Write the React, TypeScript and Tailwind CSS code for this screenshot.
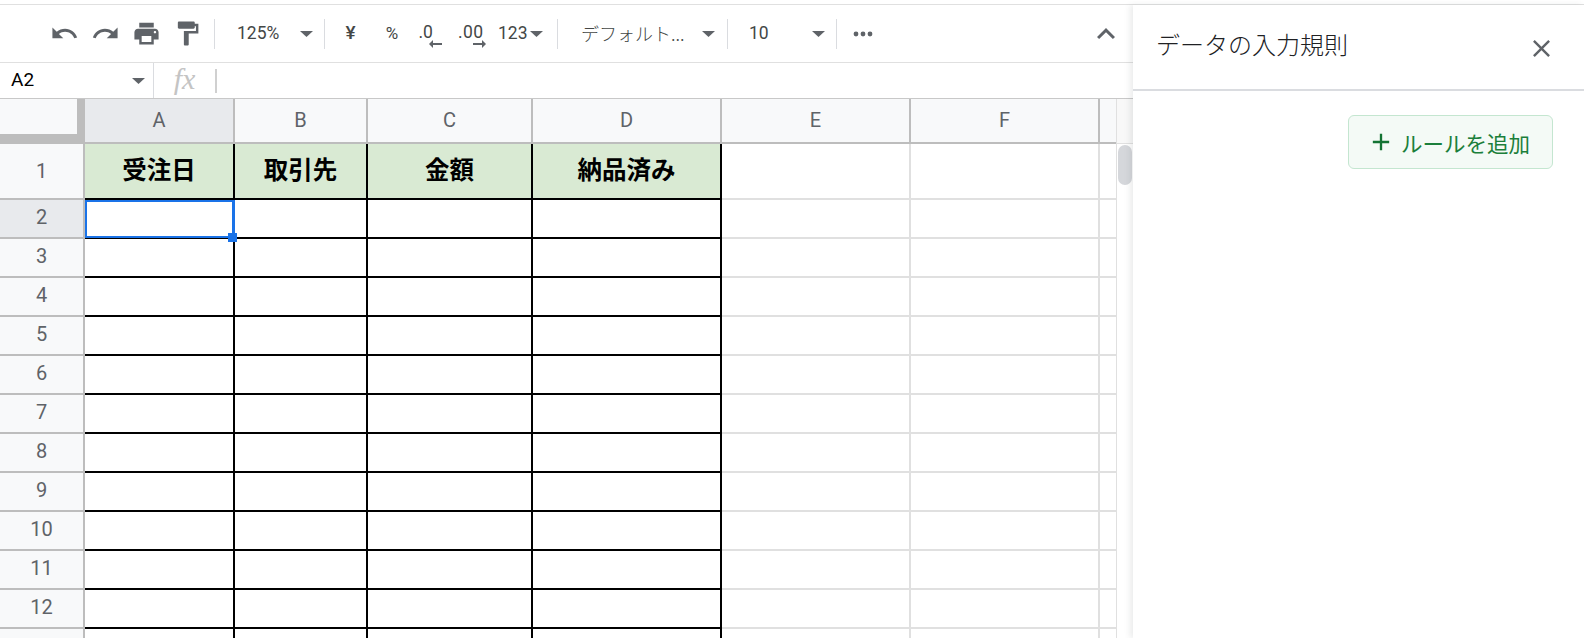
import React from "react";

const UI = "font-['Roboto','Noto_Sans_CJK_JP',sans-serif]";
const JP = "font-['Noto_Sans_CJK_JP','Noto_Sans',sans-serif]";

function Caret({ className = "" }: { className?: string }) {
  return (
    <svg width="13" height="6" viewBox="0 0 13 6" className={className}>
      <path d="M0 0h13L6.5 6z" fill="#5f6368" />
    </svg>
  );
}

function Mat({ d, size = 28, color = "#5f6368", vb = 24 }: { d: string; size?: number; color?: string; vb?: number }) {
  return (
    <svg width={size} height={size} viewBox={`0 0 ${vb} ${vb}`} className="shrink-0">
      <path d={d} fill={color} />
    </svg>
  );
}

const Sep = () => <div className="w-px h-[30px] bg-[#dadce0] shrink-0" />;

function Toolbar() {
  const icons = [
    "M12.5 8c-2.65 0-5.05.99-6.9 2.6L2 7v9h9l-3.62-3.62c1.39-1.16 3.16-1.88 5.12-1.88 3.54 0 6.55 2.31 7.6 5.5l2.37-.78C21.08 11.03 17.15 8 12.5 8z",
    "M18.4 10.6C16.55 8.99 14.15 8 11.5 8c-4.65 0-8.58 3.03-9.96 7.22L3.9 16c1.05-3.19 4.05-5.5 7.6-5.5 1.95 0 3.73.72 5.12 1.88L13 16h9V7l-3.6 3.6z",
    "M19 8H5c-1.66 0-3 1.34-3 3v6h4v4h12v-4h4v-6c0-1.66-1.34-3-3-3zm-3 11H8v-5h8v5zm3-7c-.55 0-1-.45-1-1s.45-1 1-1 1 .45 1 1-.45 1-1 1zm-1-9H6v4h12V3z",
    "M18 4V3c0-.55-.45-1-1-1H5c-.55 0-1 .45-1 1v4c0 .55.45 1 1 1h12c.55 0 1-.45 1-1V6h1v4H9v11c0 .55.45 1 1 1h2c.55 0 1-.45 1-1v-9h8V4h-3z",
  ];
  return (
    <div className={`h-[57px] flex items-center pl-[44px] text-[#444746] text-[17.5px] ${UI}`}>
      {icons.map((d, i) => (
        <div key={i} className="w-[41px] flex justify-center shrink-0">
          <Mat d={d} size={29} />
        </div>
      ))}
      <div className="w-[6px] shrink-0" />
      <Sep />
      <div className="w-[109px] shrink-0 flex items-center pl-[22px]">
        <span className="w-[63px] whitespace-nowrap">125%</span>
        <Caret />
      </div>
      <Sep />
      <div className="w-[50px] shrink-0 text-center font-medium text-[19px] pl-[1px]">¥</div>
      <div className="w-[31px] shrink-0 text-center text-[17px] pl-[3px]">%</div>
      <div className="w-[42px] shrink-0 flex justify-center pl-[6px]">
        <div className="flex flex-col items-start leading-[18px] mt-[3px]">
          <span>.0</span>
          <svg width="13" height="8" viewBox="0 0 13 8" className="ml-[10px] -mt-[1px]">
            <path d="M13 3H4V0L0 4l4 4V5h9z" fill="#5f6368" />
          </svg>
        </div>
      </div>
      <div className="w-[43px] shrink-0 flex justify-center pl-[5px]">
        <div className="flex flex-col items-start leading-[18px] mt-[3px]">
          <span className="tracking-[0.4px] whitespace-nowrap">.00</span>
          <svg width="13" height="8" viewBox="0 0 13 8" className="ml-[15px] -mt-[1px]">
            <path d="M0 3h9V0l4 4-4 4V5H0z" fill="#5f6368" />
          </svg>
        </div>
      </div>
      <div className="shrink-0 flex items-center w-[66px] pl-[7px]">
        <span>123</span>
        <Caret className="ml-[2px]" />
      </div>
      <Sep />
      <div className={`w-[169px] shrink-0 flex items-center pl-[23px] ${JP}`}>
        <span className="w-[121px] whitespace-nowrap text-[18px] font-light">デフォルト...</span>
        <Caret />
      </div>
      <Sep />
      <div className="w-[108px] shrink-0 flex items-center pl-[21px]">
        <span className="w-[63px]">10</span>
        <Caret />
      </div>
      <Sep />
      <div className="w-[53px] shrink-0 flex justify-center -ml-[1px]">
        <svg width="20" height="6" viewBox="0 0 20 6">
          <circle cx="3" cy="3" r="2.4" fill="#5f6368" />
          <circle cx="10" cy="3" r="2.4" fill="#5f6368" />
          <circle cx="17" cy="3" r="2.4" fill="#5f6368" />
        </svg>
      </div>
      <div className="flex-1 flex justify-end pr-[9px]">
        <Mat d="M12 8l-6 6 1.41 1.41L12 10.83l4.59 4.58L18 14z" size={36} />
      </div>
    </div>
  );
}

function FormulaBar() {
  return (
    <div className={`h-[35px] flex items-center ${UI}`}>
      <div className="w-[154px] h-full flex items-center pl-[11px] border-r border-[#dadce0] shrink-0">
        <span className="text-[19px] text-black w-[121px]">A2</span>
        <Caret />
      </div>
      <div className="w-[61px] text-center font-['Liberation_Serif',serif] italic text-[30px] text-[#c4c4c4] leading-none shrink-0 -mt-[4px]">
        fx
      </div>
      <div className="w-[2px] h-[24px] bg-[#d0d0d0]" />
    </div>
  );
}

const COLS = [
  { l: "A", w: "w-[150px]", h: "受注日" },
  { l: "B", w: "w-[133px]", h: "取引先" },
  { l: "C", w: "w-[165px]", h: "金額" },
  { l: "D", w: "w-[189px]", h: "納品済み" },
  { l: "E", w: "w-[189px]", h: "" },
  { l: "F", w: "w-[189px]", h: "" },
];

function HeaderRow() {
  return (
    <div className={`flex h-[45px] shrink-0 ${UI} text-[#5f6368] text-[20px]`}>
      <div className="w-[85px] shrink-0 bg-[#f8f9fa] border-r-[8px] border-b-[10px] border-[#bdbdbd]" />
      {COLS.map((c, i) => (
        <div
          key={c.l}
          className={`${c.w} shrink-0 flex items-center justify-center pb-[2px] border-r-2 border-b-[2px] border-[#bdbdbd] ${
            i === 0 ? "bg-[#e8eaed]" : "bg-[#f8f9fa]"
          }`}
        >
          {c.l}
        </div>
      ))}
      <div className="flex-1 bg-[#f8f9fa] border-b-2 border-[#bdbdbd]" />
    </div>
  );
}

function Row({ n }: { n: number }) {
  const first = n === 1;
  const selected = n === 2;
  return (
    <div className={`flex shrink-0 ${first ? "h-[56px]" : "h-[39px]"}`}>
      <div
        className={`w-[85px] shrink-0 flex items-center justify-center ${first ? "pb-[1px]" : "pb-[4px]"} border-r-2 border-b-2 border-[#bdbdbd] text-[#5f6368] text-[20px] ${UI} ${
          selected ? "bg-[#e8eaed]" : "bg-[#f8f9fa]"
        }`}
      >
        {n < 13 ? n : null}
      </div>
      {COLS.map((c, i) => {
        const dark = i < 4;
        return (
          <div
            key={c.l}
            className={`${c.w} shrink-0 relative flex items-center justify-center border-r-2 border-b-2 ${
              dark ? "border-black" : "border-[#e0e0e0]"
            } ${first && dark ? "bg-[#d9ead3]" : "bg-white"} ${selected && i === 0 ? "z-10" : ""}`}
          >
            {first && c.h ? (
              <span className={`${JP} font-bold text-[24.5px] text-black pb-[4px]`}>{c.h}</span>
            ) : null}
            {selected && i === 0 ? (
              <>
                <div className="absolute left-0 top-0 -right-[2px] -bottom-[1px] border-2 border-[#1a73e8] border-r-[3px]" />
                <div className="absolute -right-[4px] -bottom-[5px] w-[9px] h-[9px] bg-[#1a73e8]" />
              </>
            ) : null}
          </div>
        );
      })}
      <div className="flex-1 border-b-2 border-[#e0e0e0]" />
    </div>
  );
}

function Sheet() {
  return (
    <div className="flex flex-1 min-h-0 overflow-hidden">
      <div className="w-[1116px] shrink-0 flex flex-col">
        <HeaderRow />
        {[1, 2, 3, 4, 5, 6, 7, 8, 9, 10, 11, 12, 13].map((n) => (
          <Row key={n} n={n} />
        ))}
      </div>
      <div className="flex-1 border-l border-[#e0e0e0] flex flex-col">
        <div className="h-[45px] bg-[#f8f8f8] border-b border-[#e0e0e0] shrink-0" />
        <div className="w-[14px] h-[40px] ml-[1px] mt-[1px] rounded-[7px] bg-[#d5d7db]" />
      </div>
    </div>
  );
}

function Panel() {
  return (
    <div className="flex-1 bg-white relative z-20 flex flex-col shadow-[-3px_0_6px_rgba(60,64,67,0.1)]">
      <div className={`h-[86px] shrink-0 flex items-start border-b-2 border-[#dadce0] pl-[23px] pr-[28px] ${JP}`}>
        <span className="text-[24px] font-light text-[#202124] mt-[21px] leading-[36px] flex-1 whitespace-nowrap">
          データの入力規則
        </span>
        <div className="mt-[29px]">
          <Mat
            size={29}
            d="M19 6.41L17.59 5 12 10.59 6.41 5 5 6.41 10.59 12 5 17.59 6.41 19 12 13.41 17.59 19 19 17.59 13.41 12z"
          />
        </div>
      </div>
      <div className="flex justify-end pr-[31px] pt-[24px]">
        <div className="w-[205px] h-[54px] bg-[#f4faf6] border border-[#c4e6d0] rounded-[6px] flex items-center pl-[18px]">
          <Mat size={28} color="#137333" d="M19 13h-6v6h-2v-6H5v-2h6V5h2v6h6v2z" />
          <span className={`${JP} text-[21.5px] text-[#1b7f3b] ml-[6px] mt-[2px] whitespace-nowrap`}>ルールを追加</span>
        </div>
      </div>
    </div>
  );
}

export default function App() {
  return (
    <div className="w-[1584px] h-[638px] overflow-hidden bg-white flex flex-col">
      <div className="h-[5px] shrink-0 border-b border-[#e0e0e0]" />
      <div className="flex flex-1 min-h-0">
        <div className="w-[1133px] shrink-0 flex flex-col">
          <div className="border-b border-[#e0e0e0]">
            <Toolbar />
          </div>
          <div className="border-b border-[#c8c8c8]">
            <FormulaBar />
          </div>
          <Sheet />
        </div>
        <Panel />
      </div>
    </div>
  );
}
